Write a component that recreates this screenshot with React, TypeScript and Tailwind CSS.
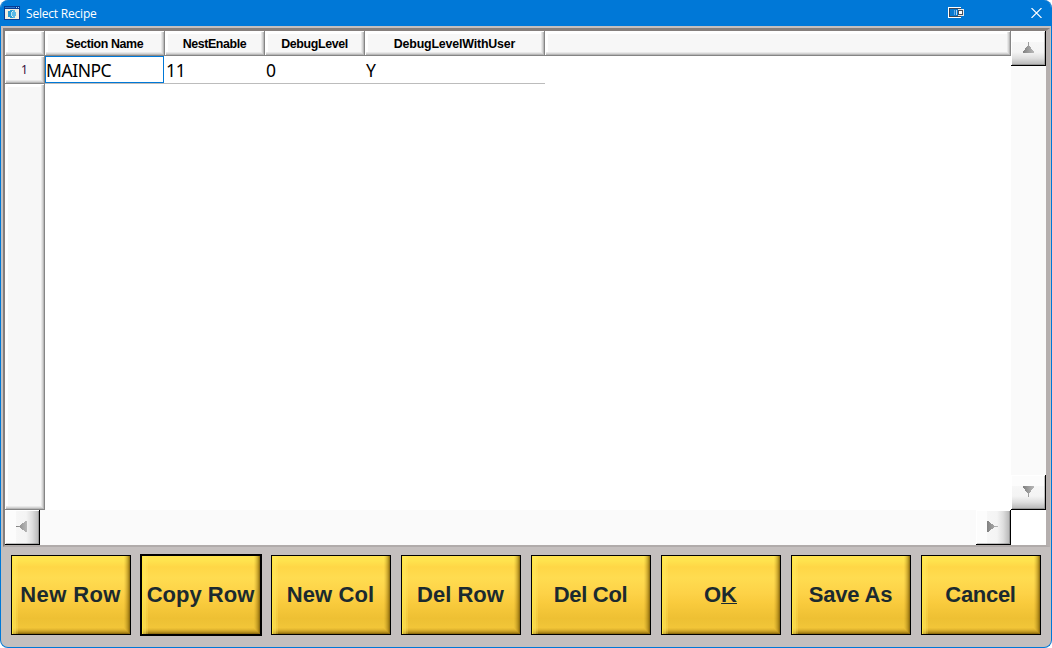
import React from "react";

const columns = [
  { name: "Section Name", value: "MAINPC", width: "w-[120px]", label: "tracking-[-0.37px]" },
  { name: "NestEnable", value: "11", width: "w-[100px]", label: "tracking-[-0.42px]" },
  { name: "DebugLevel", value: "0", width: "w-[100px]", label: "tracking-[-0.36px]" },
  { name: "DebugLevelWithUser", value: "Y", width: "w-[180px]", label: "tracking-[-0.17px]" },
];

const bevel =
  "shrink-0 border-r border-b border-[#858585] bg-[#f7f7f7] shadow-[inset_1px_1px_#fff,inset_-1px_-1px_#b8b8b8,inset_-2px_-2px_#d5d5d5,inset_-3px_-3px_#e8e8e8,inset_3px_3px_#fff]";

function HeaderCell({ className, children }: { className: string; children?: React.ReactNode }) {
  return (
    <div className={`flex items-center justify-center whitespace-nowrap ${bevel} ${className}`}>{children}</div>
  );
}

function ScrollButton({ direction }: { direction: "up" | "down" | "left" | "right" }) {
  const vertical = direction === "up" || direction === "down";
  const points = {
    up: "17,11 18,11 18,14 23,21 23,22 12,22 12,21 17,14",
    down: "12,11 23,11 23,12 18,19 18,22 17,22 17,19 12,12",
    left: "11,16 14,16 21,11 22,11 22,22 21,22 14,17 11,17",
    right: "11,11 12,11 19,16 22,16 22,17 19,17 12,22 11,22",
  }[direction];
  return (
    <div
      className={`h-[35px] w-[35px] shrink-0 border-r border-b border-black ${
        vertical
          ? "bg-[linear-gradient(180deg,#fcfcfc_0%,#fcfcfc_32%,#f6f6f6_34%,#f4f4f4_62%,#dedede_80%,#b5b5b5_100%)]"
          : "bg-[linear-gradient(90deg,#fcfcfc_0%,#fcfcfc_32%,#f6f6f6_34%,#f4f4f4_62%,#dedede_80%,#b5b5b5_100%)]"
      } shadow-[inset_1px_1px_#fff,inset_-1px_-1px_rgba(90,90,90,0.35)]`}
    >
      <svg width="34" height="34" viewBox="0 0 34 34" shapeRendering="crispEdges">
        <defs>
          <linearGradient id={`arrow-${direction}`} x1="0" x2="1" y1="0" y2="0">
            <stop offset="0" stopColor="#808080" />
            <stop offset="1" stopColor="#b8b8b8" />
          </linearGradient>
        </defs>
        <polygon points={points} fill={`url(#arrow-${direction})`} />
      </svg>
    </div>
  );
}

const actions = [
  { label: "New Row", content: "New Row", tracking: "tracking-[0.4px]" },
  { label: "Copy Row", content: "Copy Row", tracking: "tracking-[0px]", focused: true },
  { label: "New Col", content: "New Col", tracking: "tracking-[0.1px]" },
  { label: "Del Row", content: "Del Row", tracking: "tracking-[0px]" },
  { label: "Del Col", content: "Del Col", tracking: "tracking-[-0.3px]" },
  {
    label: "OK",
    content: (
      <>
        O<span className="underline decoration-1 underline-offset-1">K</span>
      </>
    ),
    tracking: "tracking-[0px]",
  },
  { label: "Save As", content: "Save As", tracking: "tracking-[-0.15px]" },
  { label: "Cancel", content: "Cancel", tracking: "tracking-[-0.3px]" },
];

export default function App() {
  return (
    <div className="flex h-[648px] w-[1052px] flex-col overflow-hidden rounded-[8px] border-x border-b border-[#0078d7] bg-[#c4bfbe] font-['Liberation_Sans',sans-serif] text-black">
      <header className="flex h-[26px] shrink-0 items-center bg-[#0078d7] pr-[9px] pl-[3px] text-white">
        <svg width="16" height="14" viewBox="0 0 16 14" shapeRendering="crispEdges">
          <rect width="16" height="14" fill="#073c94" />
          <rect x="1" y="1" width="10" height="1" fill="#2a78cf" />
          <rect x="12" y="1" width="1" height="1" fill="#9ed8ff" />
          <rect x="14" y="1" width="1" height="1" fill="#9ed8ff" />
          <rect x="1" y="3" width="14" height="10" fill="#f2eee0" />
          <path d="M4 5h2V4h3v1h-1v6h1v1H6v-1H4z" fill="#299bd3" />
          <path d="M9 4h2v2h1v4h-1v2H9v-2H8V6h1z" fill="#5bb9e6" />
          <path d="M7 6h1v4H7z" fill="#b7e4f5" />
        </svg>
        <h1 className="ml-[6px] pt-px font-['Open_Sans',sans-serif] text-[12px] leading-[26px] tracking-[-0.2px]">
          Select Recipe
        </h1>
        <div className="ml-auto flex items-center gap-[67px]">
          <svg width="16" height="12" viewBox="0 0 16 12" shapeRendering="crispEdges">
            <rect width="13" height="11" fill="#fff" />
            <rect x="1" y="1" width="12" height="9" fill="#3d4654" />
            <rect x="2" y="2" width="10" height="7" fill="#0878d0" />
            <path d="M6 3h1v5H6z" fill="#66adeb" />
            <path d="M8 3h1v5H8z" fill="#b6d5ef" />
            <rect x="10" y="2" width="6" height="7" fill="#e9e9e9" />
            <rect x="10" y="3" width="5" height="5" fill="#49505c" />
            <path d="M11 4h3v3h-3z" fill="#fff" />
          </svg>
          <svg width="11" height="10" viewBox="0 0 11 10">
            <path d="M.5 0l10 10M10.5 0l-10 10" stroke="white" strokeWidth="1.1" />
          </svg>
        </div>
      </header>

      <main className="mt-[2px] mr-px ml-[2px] flex h-[519px] shrink-0 flex-col border-t-[3px] border-r-[4px] border-b-[2px] border-l-[2px] border-t-[#857f7d] border-r-[#b5afae] border-b-[#b0abaa] border-l-[#857f7d] bg-white">
        <div className="flex h-[479px] shrink-0">
          <div className="flex w-[1006px] shrink-0 flex-col">
            <div className="flex h-[25px] shrink-0 text-[12.4px] leading-none font-bold">
              <HeaderCell className="w-[40px]" />
              {columns.map((column) => (
                <HeaderCell key={column.name} className={column.width}>
                  <span className={`pt-[2px] ${column.label}`}>{column.name}</span>
                </HeaderCell>
              ))}
              <HeaderCell className="w-[466px]" />
            </div>
            <div className="flex h-[28px] shrink-0">
              <HeaderCell className="w-[40px]">
                <span className="pt-px font-['Noto_Sans',sans-serif] text-[12px] text-[#35103d]">1</span>
              </HeaderCell>
              {columns.map((column, index) => (
                <div
                  key={column.name}
                  className={`shrink-0 border-b border-[#bcbcbc] font-['Noto_Sans',sans-serif] text-[17.5px] leading-[27px] ${column.width}`}
                >
                  {index === 0 ? (
                    <div className="h-[27px] w-[119px] border border-[#0078d7] leading-[27px] tracking-[-0.45px]">
                      {column.value}
                    </div>
                  ) : (
                    <span className="block pt-px pl-px tracking-[-0.3px]">{column.value}</span>
                  )}
                </div>
              ))}
            </div>
            <HeaderCell className="h-[426px] w-[40px]" />
          </div>
          <div className="flex w-[35px] shrink-0 flex-col justify-between bg-[#fafafa]">
            <ScrollButton direction="up" />
            <ScrollButton direction="down" />
          </div>
        </div>
        <div className="flex h-[35px] w-[1006px] shrink-0 justify-between bg-[#fafafa]">
          <ScrollButton direction="left" />
          <ScrollButton direction="right" />
        </div>
      </main>

      <footer className="mt-[8px] ml-[10px] flex h-[80px] shrink-0 gap-[10px]">
        {actions.map((action) => (
          <button
            key={action.label}
            className={`flex h-[80px] w-[120px] shrink-0 items-center justify-center border border-black bg-[linear-gradient(180deg,#ffe34e_0%,#ffe34e_6%,#ffd746_14%,#ffdc50_28%,#fdd247_48%,#f9cb3d_60%,#eec033_80%,#efc336_86%,#f7c93a_100%)] text-[22px] leading-none font-bold whitespace-nowrap text-[#1b2a2f] shadow-[inset_1px_0_#ffe63d,inset_4px_0_rgba(255,235,95,0.35),inset_6px_0_rgba(255,235,95,0.25),inset_-1px_-1px_rgba(100,75,0,0.42),inset_-2px_-2px_rgba(110,80,0,0.25),inset_-3px_-3px_rgba(110,80,0,0.16),inset_-4px_-4px_rgba(110,80,0,0.12),inset_-5px_-5px_rgba(110,80,0,0.08),inset_-6px_-6px_rgba(110,80,0,0.05)] ${action.tracking} ${
              action.focused ? "outline outline-black" : ""
            }`}
          >
            <span className="pr-px">{action.content}</span>
          </button>
        ))}
      </footer>
    </div>
  );
}
